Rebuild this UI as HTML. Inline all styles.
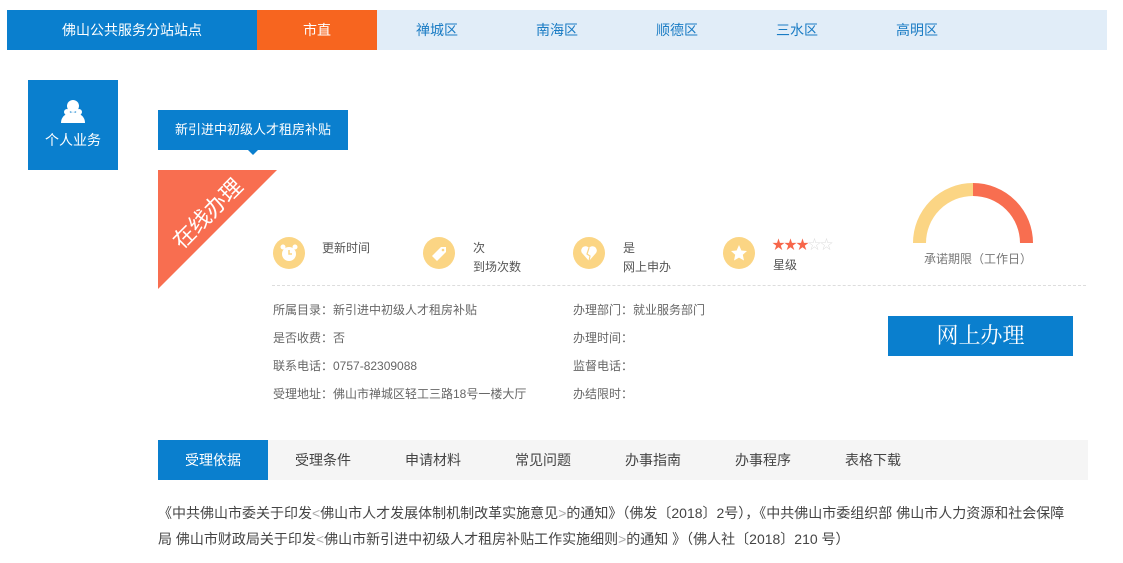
<!DOCTYPE html>
<html><head><meta charset="utf-8"><style>
*{margin:0;padding:0;box-sizing:border-box}
body{width:1123px;height:563px;background:#fff;font-family:"Liberation Sans","Noto Sans CJK SC",sans-serif;position:relative;overflow:hidden;color:#555}
.a{position:absolute}
.nav{top:10px;height:40px;line-height:40px;text-align:center;font-size:14px}
.ic{width:32px;height:32px;border-radius:50%;background:#fbd584}
.t{font-size:12px;color:#555;white-space:nowrap}
.row{font-size:12px;color:#666;white-space:nowrap}
.tab{top:440px;height:40px;line-height:40px;font-size:14px;color:#444;width:110px;text-align:center}
</style></head><body>
<div class="a nav" style="left:7px;width:1100px;background:#e1edf8"></div>
<div class="a nav" style="left:7px;width:250px;background:#0a7fce;color:#fff">佛山公共服务分站站点</div>
<div class="a nav" style="left:257px;width:120px;background:#f7651f;color:#fff">市直</div>
<div class="a nav" style="left:377px;width:120px;color:#1a7cc4">禅城区</div>
<div class="a nav" style="left:497px;width:120px;color:#1a7cc4">南海区</div>
<div class="a nav" style="left:617px;width:120px;color:#1a7cc4">顺德区</div>
<div class="a nav" style="left:737px;width:120px;color:#1a7cc4">三水区</div>
<div class="a nav" style="left:857px;width:120px;color:#1a7cc4">高明区</div>

<div class="a" style="left:28px;top:80px;width:90px;height:90px;background:#0a7fce;color:#fff;text-align:center;font-size:14px">
<svg width="30" height="26" viewBox="0 0 30 26" style="margin-top:19px"><circle cx="15" cy="7" r="6" fill="#fff"/><circle cx="9" cy="13" r="3" fill="#fff"/><circle cx="21" cy="13" r="3" fill="#fff"/><path d="M3 24 Q3 15 15 13 Q27 15 27 24Z" fill="#fff"/></svg>
<div style="margin-top:2px">个人业务</div></div>

<div class="a" style="left:158px;top:110px;width:190px;height:40px;background:#0a7fce;color:#fff;font-size:13px;line-height:40px;text-align:center">新引进中初级人才租房补贴</div>
<div class="a" style="left:248px;top:150px;width:0;height:0;border-left:5px solid transparent;border-right:5px solid transparent;border-top:5px solid #0a7fce"></div>

<svg class="a" style="left:158px;top:170px" width="120" height="120"><polygon points="0,0 119,0 0,119" fill="#f86e50"/><text x="0" y="0" transform="translate(24,80) rotate(-45)" fill="#fff" font-size="22" font-family="Liberation Sans,Noto Sans CJK SC,sans-serif">在线办理</text></svg>

<div class="a ic" style="left:273px;top:237px"><svg width="32" height="32"><circle cx="16" cy="17" r="7" fill="#fff"/><path d="M16 13v4h3" stroke="#fbd584" stroke-width="1.5" fill="none"/><circle cx="10" cy="10" r="2.5" fill="#fff"/><circle cx="22" cy="10" r="2.5" fill="#fff"/></svg></div>
<div class="a t" style="left:322px;top:239px">更新时间</div>
<div class="a ic" style="left:423px;top:237px"><svg width="32" height="32"><path d="M9 19 L18 10 L23 10 L23 15 L14 24Z" fill="#fff"/><circle cx="20" cy="13" r="1.3" fill="#fbd584"/></svg></div>
<div class="a t" style="left:473px;top:239px;line-height:19px">次<br>到场次数</div>
<div class="a ic" style="left:573px;top:237px"><svg width="32" height="32"><path d="M16 24 L9 16 A4 4 0 0 1 16 11 A4 4 0 0 1 23 16Z" fill="#fff"/><path d="M16 11 L14 17 L17 19 L16 24" stroke="#fbd584" stroke-width="1.2" fill="none"/></svg></div>
<div class="a t" style="left:623px;top:239px;line-height:19px">是<br>网上申办</div>
<div class="a ic" style="left:723px;top:237px"><svg width="32" height="32"><polygon points="16,8 18.4,13.5 24,14 19.8,17.8 21,23.5 16,20.6 11,23.5 12.2,17.8 8,14 13.6,13.5" fill="#fff"/></svg></div>
<div class="a" style="left:772px;top:234px;font-size:13px;letter-spacing:-1px"><span style="color:#f7664a">★★★</span><span style="color:#ddd">☆☆</span></div>
<div class="a t" style="left:773px;top:256px">星级</div>

<div class="a" style="left:272px;top:285px;width:814px;border-top:1px dashed #ddd"></div>

<div class="a row" style="left:273px;top:301px">所属目录：新引进中初级人才租房补贴</div>
<div class="a row" style="left:273px;top:329px">是否收费：否</div>
<div class="a row" style="left:273px;top:357px">联系电话：0757-82309088</div>
<div class="a row" style="left:273px;top:385px">受理地址：佛山市禅城区轻工三路18号一楼大厅</div>
<div class="a row" style="left:573px;top:301px">办理部门：就业服务部门</div>
<div class="a row" style="left:573px;top:329px">办理时间：</div>
<div class="a row" style="left:573px;top:357px">监督电话：</div>
<div class="a row" style="left:573px;top:385px">办结限时：</div>

<svg class="a" style="left:910px;top:182px" width="126" height="64">
<path d="M9.5 61 A53.5 53.5 0 0 1 63 7.5" stroke="#fbd584" stroke-width="13" fill="none"/>
<path d="M63 7.5 A53.5 53.5 0 0 1 116.5 61" stroke="#f86e50" stroke-width="13" fill="none"/></svg>
<div class="a t" style="left:924px;top:250px;color:#777">承诺期限（工作日）</div>

<div class="a" style="left:888px;top:316px;width:185px;height:40px;background:#0a7fce;color:#fff;font-size:22px;line-height:40px;text-align:center;font-family:'Liberation Serif','Noto Serif CJK SC',serif">网上办理</div>

<div class="a" style="left:158px;top:440px;width:930px;height:40px;background:#f5f5f5"></div>
<div class="a tab" style="left:158px;background:#0a7fce;color:#fff">受理依据</div>
<div class="a tab" style="left:268px">受理条件</div>
<div class="a tab" style="left:378px">申请材料</div>
<div class="a tab" style="left:488px">常见问题</div>
<div class="a tab" style="left:598px">办事指南</div>
<div class="a tab" style="left:708px">办事程序</div>
<div class="a tab" style="left:818px">表格下载</div>

<div class="a" style="left:158px;top:500px;width:928px;font-size:14px;line-height:26px;color:#444">《中共佛山市委关于印发<span style="color:#aaa">&lt;</span>佛山市人才发展体制机制改革实施意见<span style="color:#aaa">&gt;</span>的通知》（佛发〔2018〕2号），《中共佛山市委组织部 佛山市人力资源和社会保障<br>局 佛山市财政局关于印发<span style="color:#aaa">&lt;</span>佛山市新引进中初级人才租房补贴工作实施细则<span style="color:#aaa">&gt;</span>的通知 》（佛人社〔2018〕210 号）</div>
</body></html>
